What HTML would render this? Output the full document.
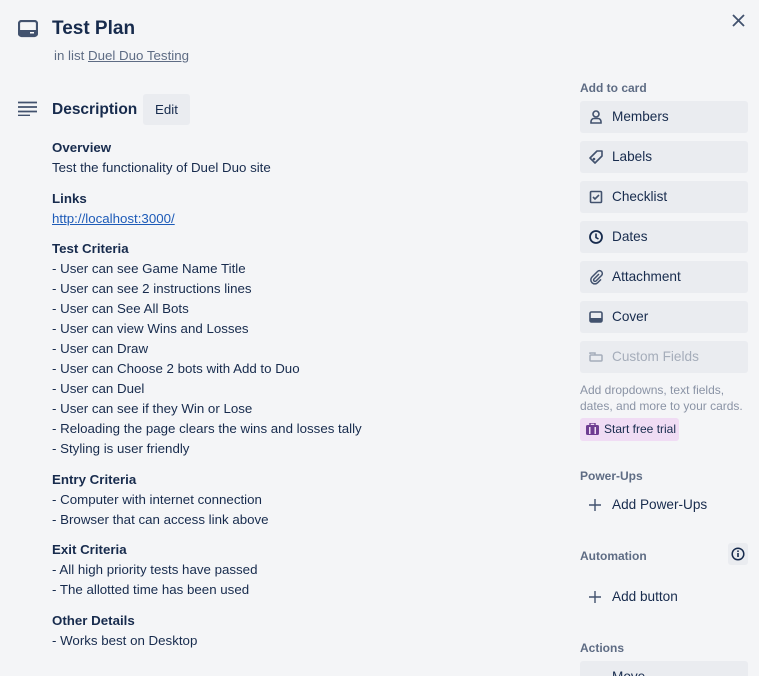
<!DOCTYPE html>
<html style="overflow:hidden;height:676px"><head><meta charset="utf-8"><style>
*{margin:0;padding:0;box-sizing:border-box}
body{width:759px;height:676px;overflow:hidden;background:#f4f5f7;font-family:"Liberation Sans",sans-serif;color:#172b4d;position:relative;font-size:13.3px}
.a{position:absolute}
.ln{line-height:20px;white-space:nowrap}
.b{font-weight:bold}
.btn{position:absolute;left:580px;width:168px;height:32px;background:#eaecf0;border-radius:3px;font-size:13.6px;line-height:32px;padding-left:32px;color:#172b4d}
.btn svg{position:absolute;left:8px;top:8px}
.h{position:absolute;left:580px;font-size:12px;color:#5e6c84;font-weight:bold}
</style></head><body>
<svg class="a" style="left:18px;top:20px" width="20" height="18" viewBox="0 0 20 18"><rect x="1" y="1" width="18" height="15" rx="2.5" fill="none" stroke="#42526e" stroke-width="2.2"/><rect x="1" y="10" width="18" height="6" fill="#42526e"/><rect x="12" y="12" width="4" height="1.5" fill="#fff"/></svg>
<div class="a" style="left:52px;top:18px;font-size:19px;font-weight:bold;color:#172b4d">Test Plan</div>
<div class="a" style="left:54px;top:48px;font-size:13.3px;color:#5e6c84">in list <span style="text-decoration:underline">Duel Duo Testing</span></div>
<svg class="a" style="left:731px;top:13px" width="15" height="15" viewBox="0 0 15 15"><path d="M2 2L13 13M13 2L2 13" stroke="#42526e" stroke-width="1.8"/></svg>
<svg class="a" style="left:18px;top:101px" width="19" height="15" viewBox="0 0 19 15"><path d="M0 1.5H19M0 6H19M0 10.5H19M0 14.5H12" stroke="#42526e" stroke-width="1.8"/></svg>
<div class="a" style="left:52px;top:101px;font-size:15.5px;font-weight:bold">Description</div>
<div class="a" style="left:143px;top:94px;width:47px;height:31px;background:#eaecf0;border-radius:3px;font-size:13.3px;line-height:31px;text-align:center">Edit</div>
<div class="a" style="left:52px;top:138px">
<div class="ln b">Overview</div><div class="ln">Test the functionality of Duel Duo site</div></div>
<div class="a" style="left:52px;top:189px">
<div class="ln b">Links</div><div class="ln" style="text-decoration:underline;color:#1d5bb8">http://localhost:3000/</div></div>
<div class="a" style="left:52px;top:239px">
<div class="ln b">Test Criteria</div>
<div class="ln">- User can see Game Name Title</div>
<div class="ln">- User can see 2 instructions lines</div>
<div class="ln">- User can See All Bots</div>
<div class="ln">- User can view Wins and Losses</div>
<div class="ln">- User can Draw</div>
<div class="ln">- User can Choose 2 bots with Add to Duo</div>
<div class="ln">- User can Duel</div>
<div class="ln">- User can see if they Win or Lose</div>
<div class="ln">- Reloading the page clears the wins and losses tally</div>
<div class="ln">- Styling is user friendly</div></div>
<div class="a" style="left:52px;top:470px">
<div class="ln b">Entry Criteria</div><div class="ln">- Computer with internet connection</div><div class="ln">- Browser that can access link above</div></div>
<div class="a" style="left:52px;top:540px">
<div class="ln b">Exit Criteria</div><div class="ln">- All high priority tests have passed</div><div class="ln">- The allotted time has been used</div></div>
<div class="a" style="left:52px;top:611px">
<div class="ln b">Other Details</div><div class="ln">- Works best on Desktop</div></div>

<div class="h" style="top:81px">Add to card</div>
<div class="btn" style="top:101px"><svg width="16" height="16" viewBox="0 0 16 16"><circle cx="8" cy="5" r="3" fill="none" stroke="#42526e" stroke-width="1.6"/><path d="M3 14v-1.5a3 3 0 0 1 3-3h4a3 3 0 0 1 3 3V14z" fill="none" stroke="#42526e" stroke-width="1.6"/></svg>Members</div>
<div class="btn" style="top:141px"><svg width="16" height="16" viewBox="0 0 16 16"><path d="M9 2h5v5l-7 7-5-5z" fill="none" stroke="#42526e" stroke-width="1.6" stroke-linejoin="round"/><circle cx="6" cy="10" r="1.3" fill="#42526e"/></svg>Labels</div>
<div class="btn" style="top:181px"><svg width="16" height="16" viewBox="0 0 16 16"><rect x="2.5" y="2.5" width="11" height="11" rx="1" fill="none" stroke="#42526e" stroke-width="1.6"/><path d="M5 8l2 2 4-4" fill="none" stroke="#42526e" stroke-width="1.6"/></svg>Checklist</div>
<div class="btn" style="top:221px"><svg width="16" height="16" viewBox="0 0 16 16"><circle cx="8" cy="8" r="6" fill="none" stroke="#172b4d" stroke-width="1.8"/><path d="M8 4.5V8.5L10.5 10" fill="none" stroke="#172b4d" stroke-width="1.6"/></svg>Dates</div>
<div class="btn" style="top:261px"><svg width="16" height="16" viewBox="0 0 16 16"><path d="M11 5l-5 5a1.4 1.4 0 0 0 2 2l5.5-5.5a2.8 2.8 0 0 0-4-4L4 8a4 4 0 0 0 5.7 5.7L13 10.4" fill="none" stroke="#42526e" stroke-width="1.5"/></svg>Attachment</div>
<div class="btn" style="top:301px"><svg width="16" height="16" viewBox="0 0 16 16"><rect x="2" y="3" width="12" height="10" rx="1.5" fill="none" stroke="#42526e" stroke-width="1.6"/><rect x="2" y="9" width="12" height="4" fill="#42526e"/></svg>Cover</div>
<div class="btn" style="top:341px;color:#a5adba"><svg width="16" height="16" viewBox="0 0 16 16"><rect x="2" y="6" width="12" height="6" rx="1" fill="none" stroke="#a5adba" stroke-width="1.5"/><path d="M2 5V4h5v2" fill="none" stroke="#a5adba" stroke-width="1.5"/></svg>Custom Fields</div>
<div class="a" style="left:580px;top:382px;font-size:12px;line-height:16px;color:#8a93a5">Add dropdowns, text fields,<br>dates, and more to your cards.</div>
<div class="a" style="left:580px;top:418px;width:99px;height:23px;background:#f0dcf4;border-radius:3px;font-size:12px;line-height:23px;padding-left:24px;color:#172b4d"><svg style="position:absolute;left:6px;top:5px" width="13" height="12" viewBox="0 0 13 12"><rect x="0" y="2" width="13" height="10" rx="1.5" fill="#6e3d91"/><rect x="4" y="0" width="5" height="3" fill="none" stroke="#6e3d91" stroke-width="1.4"/><rect x="3" y="4" width="1.5" height="7" fill="#f0dcf4"/><rect x="8.5" y="4" width="1.5" height="7" fill="#f0dcf4"/></svg>Start free trial</div>
<div class="h" style="top:469px">Power-Ups</div>
<svg class="a" style="left:589px;top:499px" width="12" height="12" viewBox="0 0 12 12"><path d="M6 0V12M0 6H12" stroke="#42526e" stroke-width="1.4"/></svg>
<div class="a" style="left:612px;top:496px;font-size:13.6px;line-height:18px">Add Power-Ups</div>
<div class="h" style="top:549px">Automation</div>
<div class="a" style="left:728px;top:543px;width:20px;height:22px;background:#eaecf0;border-radius:3px"><svg style="position:absolute;left:3px;top:4px" width="14" height="14" viewBox="0 0 14 14"><circle cx="7" cy="7" r="5.8" fill="none" stroke="#172b4d" stroke-width="1.5"/><rect x="6.2" y="6" width="1.6" height="4" fill="#172b4d"/><circle cx="7" cy="4.2" r="0.9" fill="#172b4d"/></svg></div>
<svg class="a" style="left:589px;top:591px" width="12" height="12" viewBox="0 0 12 12"><path d="M6 0V12M0 6H12" stroke="#42526e" stroke-width="1.4"/></svg>
<div class="a" style="left:612px;top:588px;font-size:13.6px;line-height:18px">Add button</div>
<div class="h" style="top:641px">Actions</div>
<div class="btn" style="top:661px;height:15px;overflow:hidden;border-radius:3px 3px 0 0">Move</div>
</body></html>
